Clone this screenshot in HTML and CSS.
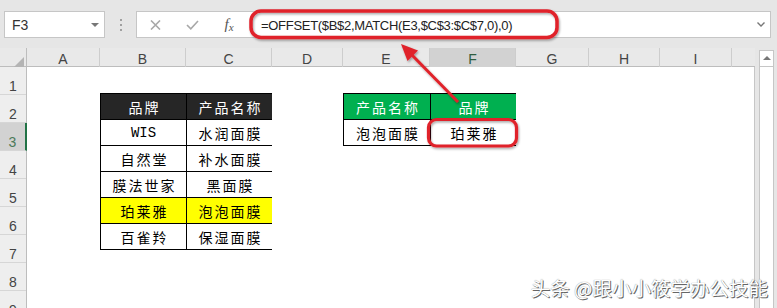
FILE: index.html
```html
<!DOCTYPE html>
<html lang="zh-CN">
  <head>
    <meta charset="UTF-8" />
    <meta name="viewport" content="width=device-width, initial-scale=1.0" />
    <title>OFFSET + MATCH 反向查找</title>
    <link rel="stylesheet" href="styles.css">
  </head>

  <body>
    <div class="app">
      <!-- 名称框 + 编辑栏 -->
      <div class="formula-row">
        <div class="name-box">
          <span>F3</span>
          <span class="caret"></span>
        </div>
        <div class="grip"><i></i><i></i><i></i></div>
        <div class="formula-box">
          <div class="buttons">
            <span class="btn">
              <svg width="11" height="10" viewBox="0 0 11 10"><path d="M1 0.5 L10 9.5 M10 0.5 L1 9.5" stroke="#a8a8a8" stroke-width="1.6" fill="none"/></svg>
            </span>
            <span class="btn">
              <svg width="13" height="10" viewBox="0 0 13 10"><path d="M1 5 L4.8 8.8 L12 1" stroke="#a8a8a8" stroke-width="1.6" fill="none"/></svg>
            </span>
            <span class="btn fx">f<span class="sub">x</span></span>
          </div>
          <div class="formula">=OFFSET($B$2,MATCH(E3,$C$3:$C$7,0),0)</div>
          <span class="chevron">
            <svg width="8" height="5" viewBox="0 0 8 5"><path d="M0.5 0.5 L4 4 L7.5 0.5" stroke="#777" stroke-width="1.4" fill="none"/></svg>
          </span>
        </div>
      </div>

      <!-- 工作表 -->
      <div class="sheet">
        <div class="grid">
          <div class="col-headers">
            <div class="corner"></div>
            <div>A</div>
            <div>B</div>
            <div>C</div>
            <div>D</div>
            <div>E</div>
            <div class="selected">F</div>
            <div>G</div>
            <div>H</div>
            <div>I</div>
            <div></div>
          </div>

          <div class="body">
            <div class="row-headers">
              <div>1</div>
              <div>2</div>
              <div class="selected">3</div>
              <div>4</div>
              <div>5</div>
              <div>6</div>
              <div>7</div>
              <div>8</div>
              <div>9</div>
            </div>

            <div class="cells">
              <!-- 数据源 B2:C7 -->
              <div class="table brands">
                <div class="cell head">品牌</div>
                <div class="cell head">产品名称</div>
                <div class="cell mono">WIS</div>
                <div class="cell">水润面膜</div>
                <div class="cell">自然堂</div>
                <div class="cell">补水面膜</div>
                <div class="cell">膜法世家</div>
                <div class="cell">黑面膜</div>
                <div class="cell hit">珀莱雅</div>
                <div class="cell hit">泡泡面膜</div>
                <div class="cell">百雀羚</div>
                <div class="cell">保湿面膜</div>
              </div>

              <!-- 查询结果 E2:F3 -->
              <div class="table lookup">
                <div class="cell green">产品名称</div>
                <div class="cell green">品牌</div>
                <div class="cell">泡泡面膜</div>
                <div class="cell">珀莱雅</div>
              </div>
            </div>
          </div>
        </div>

        <div class="scrollbar">
          <div class="scroll-up"></div>
        </div>
      </div>

      <!-- 红色标注 -->
      <svg class="marks" width="777" height="308" viewBox="0 0 777 308">
        <defs>
          <filter id="shadow" x="-10%" y="-10%" width="120%" height="130%">
            <feDropShadow dx="1" dy="1.5" stdDeviation="1" flood-color="#000" flood-opacity="0.35"/>
          </filter>
        </defs>
        <g filter="url(#shadow)" stroke="#e0232b" fill="none">
          <rect x="251" y="11" width="306" height="26.5" rx="10" stroke-width="3.5"/>
          <rect x="428.5" y="119.5" width="88" height="26.5" rx="8" stroke-width="3.2"/>
          <line x1="458" y1="102" x2="409" y2="52" stroke-width="3"/>
          <polygon points="401,44 418,50.5 407.5,61" fill="#e0232b" stroke="none"/>
        </g>
      </svg>

      <div class="watermark">头条 @跟小小筱学办公技能</div>
    </div>
  </body>
</html>
```

FILE: styles.css
```css
/* Página inteira do print */
body {
  margin: 0;
  padding: 0;
  font-family: "Liberation Sans", Arial, sans-serif;
}

.app {
  position: relative;
  width: 777px;
  height: 308px;
  overflow: hidden;
  background-color: #e6e6e6;
}

/* Barra de fórmulas */
.formula-row {
  display: flex;
  align-items: flex-start;
  height: 48px;
  padding: 11px 6px 0 4px;
  box-sizing: border-box;
}

.name-box {
  display: flex;
  align-items: center;
  justify-content: space-between;
  width: 101px;
  height: 27px;
  box-sizing: border-box;
  padding: 1px 5px 0 7px;
  background-color: #fff;
  border: 1px solid #c6c6c6;
  font-size: 14px;
  color: #333;
}

.caret {
  width: 0;
  height: 0;
  border-left: 4px solid transparent;
  border-right: 4px solid transparent;
  border-top: 4px solid #777;
}

.grip {
  display: flex;
  flex-direction: column;
  align-items: center;
  gap: 3px;
  width: 31px;
  padding-top: 8px;
}

.grip i {
  width: 2px;
  height: 2px;
  background-color: #a0a0a0;
}

.formula-box {
  flex: 1;
  display: flex;
  align-items: center;
  height: 27px;
  box-sizing: border-box;
  background-color: #fff;
  border: 1px solid #c6c6c6;
}

.buttons {
  display: flex;
  align-items: center;
  width: 112px;
}

.btn {
  display: flex;
  justify-content: center;
  align-items: center;
  width: 36px;
  height: 25px;
}

.btn:nth-child(2) {
  width: 38px;
}

.fx {
  font-family: "Liberation Serif", serif;
  font-style: italic;
  font-size: 15px;
  color: #555;
}

.fx .sub {
  font-size: 11px;
  position: relative;
  top: 2px;
}

.formula {
  flex: 1;
  padding-left: 12px;
  padding-top: 1px;
  font-size: 13px;
  letter-spacing: -0.3px;
  color: #222;
}

.chevron {
  display: flex;
  width: 18px;
  justify-content: center;
}

/* Planilha */
.sheet {
  display: flex;
  height: 260px;
}

.grid {
  display: flex;
  flex-direction: column;
  width: 755px;
}

.col-headers {
  display: grid;
  grid-template-columns: 27px 73px 86px 86px 71px 87px 86px 73px 71px 72px 23px;
  height: 19px;
  box-sizing: border-box;
  border-bottom: 1px solid #bdbdbd;
  background-color: #e9e9e9;
}

.col-headers div {
  box-sizing: border-box;
  padding-top: 3px;
  border-right: 1px solid #cdcdcd;
  text-align: center;
  font-size: 14px;
  line-height: 16px;
  color: #444;
}

.col-headers div:last-child {
  border-right: none;
}

.col-headers .corner {
  position: relative;
  border-right: 1px solid #bdbdbd;
}

.corner::after {
  content: "";
  position: absolute;
  right: 2px;
  bottom: 2px;
  width: 0;
  height: 0;
  border-left: 10px solid transparent;
  border-bottom: 10px solid #b4b4b4;
}

.col-headers .selected {
  background-color: #d2d2d2;
  border-bottom: 2px solid #217346;
  color: #2f5d40;
}

.body {
  display: flex;
  flex: 1;
  min-height: 0;
}

.row-headers {
  display: flex;
  flex-direction: column;
  width: 27px;
  box-sizing: border-box;
  border-right: 1px solid #bdbdbd;
  background-color: #eeeeee;
}

.row-headers div {
  flex: 0 0 26px;
  box-sizing: border-box;
  padding-top: 11px;
  border-bottom: 1px solid #d6d6d6;
  text-align: center;
  font-size: 14px;
  line-height: 16px;
  color: #444;
}

.row-headers .selected {
  margin-right: -1px;
  background-color: #d2d2d2;
  border-right: 2px solid #217346;
  color: #4c7a5b;
}

.cells {
  flex: 1;
  display: grid;
  grid-template-columns: 73px 86px 86px 71px 87px 86px 73px 71px 72px 22px;
  grid-template-rows: repeat(9, 26px) 1fr;
  background-color: #fff;
  border-right: 1px solid #c6c6c6;
}

/* Tabelas com borda preta de 1px */
.table {
  display: grid;
  gap: 1px;
  padding: 1px;
  align-self: start;
  background-color: #000;
}

.brands {
  grid-column: 2 / 4;
  grid-row: 2 / 8;
  grid-template-columns: 85px 85px;
  grid-auto-rows: 25px;
}

.lookup {
  grid-column: 5 / 7;
  grid-row: 2 / 4;
  grid-template-columns: 86px 85px;
  grid-auto-rows: 25px;
}

.cell {
  display: flex;
  justify-content: center;
  align-items: center;
  padding-left: 2px;
  background-color: #fff;
  font-family: "Noto Sans CJK SC", sans-serif;
  font-size: 14px;
  letter-spacing: 2px;
  color: #000;
}

.cell.head {
  background-color: #262626;
  color: #fff;
}

.cell.green {
  background-color: #00b050;
  color: #fff;
}

.cell.hit {
  background-color: #ffff00;
}

.cell.mono {
  font-family: "Liberation Mono", monospace;
  letter-spacing: 0;
  padding-left: 0;
}

/* Barra de rolagem vertical */
.scrollbar {
  width: 15px;
  margin: 2px 0 0 4px;
  box-sizing: border-box;
  border: 1px solid #c6c6c6;
  border-bottom: none;
  background-color: #fff;
}

.scroll-up {
  position: relative;
  height: 15px;
  border-bottom: 1px solid #c6c6c6;
}

.scroll-up::after {
  content: "";
  position: absolute;
  left: 3px;
  top: 5px;
  border-left: 4px solid transparent;
  border-right: 4px solid transparent;
  border-bottom: 4px solid #777;
}

/* Marcações em vermelho por cima */
.marks {
  position: absolute;
  top: 0;
  left: 0;
  z-index: 2;
  pointer-events: none;
}

.watermark {
  position: absolute;
  right: 9px;
  bottom: 9px;
  z-index: 2;
  font-family: "Noto Sans CJK SC", sans-serif;
  font-size: 19.5px;
  line-height: 22px;
  color: #fff;
  text-shadow: 1px 1px 0 #666, 0 0 1px #777;
}
```
